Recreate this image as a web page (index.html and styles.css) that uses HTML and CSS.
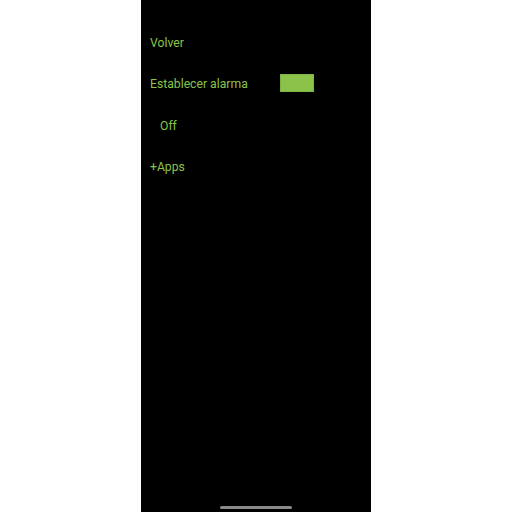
FILE: index.html
```html
<!DOCTYPE html>
<html>
<head>
<meta charset="utf-8">
<link rel="stylesheet" href="styles.css">
</head>
<body>
<div class="screen">
  <div class="menu">
    <div class="row">Volver</div>
    <div class="row alarm"><span class="label">Establecer alarma</span><span class="swatch"></span></div>
    <div class="row sub">Off</div>
    <div class="row">+Apps</div>
  </div>
  <div class="home"><span class="bar"></span></div>
</div>
</body>
</html>
```
FILE: styles.css
```css
html, body {
  margin: 0;
  padding: 0;
  background: #ffffff;
  height: 512px;
}
body {
  display: flex;
  justify-content: center;
}
.screen {
  width: 230px;
  height: 512px;
  background: #000000;
  display: flex;
  flex-direction: column;
  justify-content: space-between;
  font-family: Roboto, "Liberation Sans", sans-serif;
  font-size: 12.2px;
  color: #8bc34a;
}
.menu {
  display: flex;
  flex-direction: column;
  padding: 36px 0 0 9px;
}
.row {
  height: 41.3px;
  display: flex;
  align-items: flex-start;
  line-height: 15px;
}
.alarm .label {
  width: 130px;
}
.swatch {
  width: 34px;
  height: 18px;
  background: #8bc34a;
  box-sizing: border-box;
  border: 1px solid #7cb342;
  margin-top: -3px;
}
.sub {
  padding-left: 10px;
}
.home {
  display: flex;
  justify-content: center;
  padding-bottom: 3px;
}
.bar {
  width: 72px;
  height: 3px;
  border-radius: 2px;
  background: #8a8a8a;
}
```
